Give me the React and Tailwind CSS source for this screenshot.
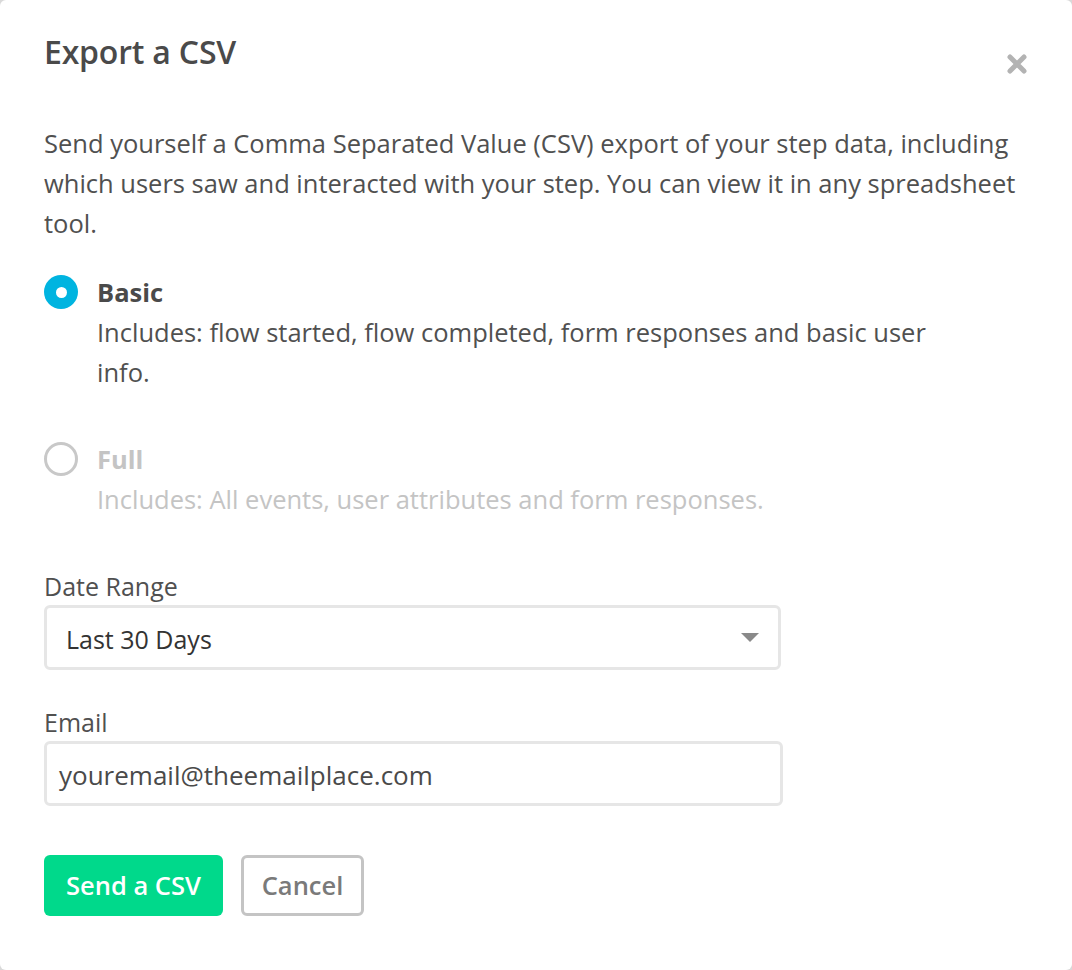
import React from "react";

export default function App() {
  const font = { fontFamily: "'Open Sans', 'Noto Sans', sans-serif" };
  return (
    <div className="w-[1072px] h-[970px] bg-[#d9d9d9]" style={font}>
      <div className="w-full h-full bg-white rounded-[6px] flex flex-col pl-[44px] pr-[40px] pt-[30px] text-[#4a4a4a]">
        <div className="flex items-start justify-between">
          <h1 className="text-[32px] font-semibold leading-[44px] tracking-[-0.2px] text-[#4a4a4a]">Export a CSV</h1>
          <button className="mt-[23px] mr-[4px] text-[#b3b3b3]" aria-label="close">
            <svg width="22" height="22" viewBox="0 0 22 22">
              <path d="M4 4 L18 18 M18 4 L4 18" stroke="currentColor" strokeWidth="5" strokeLinecap="round" />
            </svg>
          </button>
        </div>

        <p className="mt-[48px] text-[25.5px] leading-[40px] w-[985px] text-[#505050]">
          Send yourself a Comma Separated Value (CSV) export of your step data, including which users saw and interacted with your step. You can view it in any spreadsheet tool.
        </p>

        <div className="mt-[29px] flex gap-[19px]">
          <div className="mt-[3px] w-[34px] h-[34px] rounded-full bg-[#00b4e0] flex items-center justify-center shrink-0">
            <div className="w-[11px] h-[11px] rounded-full bg-white" />
          </div>
          <div className="flex flex-col">
            <div className="text-[25.5px] font-bold leading-[40px] text-[#4a4a4a]">Basic</div>
            <div className="text-[25.5px] leading-[40px] w-[850px] text-[#505050]">
              Includes: flow started, flow completed, form responses and basic user info.
            </div>
          </div>
        </div>

        <div className="mt-[47px] flex gap-[19px]">
          <div className="mt-[3px] w-[34px] h-[34px] rounded-full border-[3px] border-[#c8c8c8] shrink-0" />
          <div className="flex flex-col">
            <div className="text-[25.5px] font-bold leading-[40px] text-[#c4c4c4]">Full</div>
            <div className="text-[25.5px] leading-[40px] text-[#c4c4c4]">
              Includes: All events, user attributes and form responses.
            </div>
          </div>
        </div>

        <label className="mt-[49px] text-[25px] leading-[36px] text-[#505050]">Date Range</label>
        <div className="mt-[1px] w-[737px] h-[65px] border-[3px] border-[#e6e6e6] rounded-[6px] flex items-center justify-between pl-[19px] pr-[18px]">
          <span className="pt-[4px] text-[25px] text-[#333333]">Last 30 Days</span>
          <svg width="20" height="11" viewBox="0 0 20 11">
            <path d="M1 1 L19 1 L10 10 Z" fill="#8a8a8a" />
          </svg>
        </div>

        <label className="mt-[34px] text-[25px] leading-[36px] text-[#505050]">Email</label>
        <div className="mt-[1px] w-[739px] h-[65px] border-[3px] border-[#e6e6e6] rounded-[6px] flex items-center pl-[12px]">
          <span className="pt-[4px] text-[26px] text-[#4a4a4a]">youremail@theemailplace.com</span>
        </div>

        <div className="mt-[49px] flex gap-[18px]">
          <button className="w-[179px] h-[61px] rounded-[6px] bg-[#00d98b] text-white text-[25.5px] font-semibold">
            Send a CSV
          </button>
          <button className="w-[123px] h-[61px] rounded-[6px] border-[3px] border-[#c4c4c4] bg-white text-[#7a7a7a] text-[25.5px] font-semibold">
            Cancel
          </button>
        </div>
      </div>
    </div>
  );
}
